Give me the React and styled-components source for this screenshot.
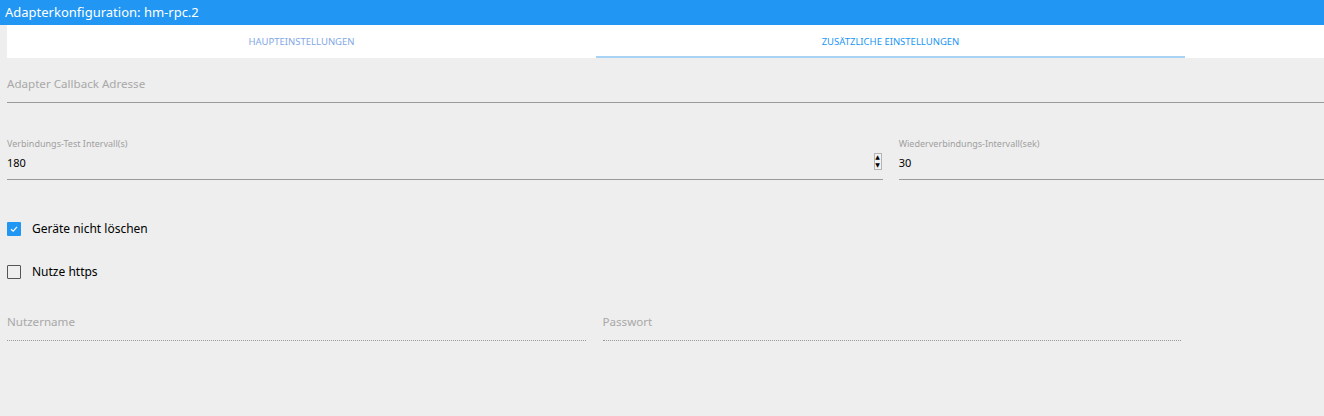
import React from 'react';
import styled, { createGlobalStyle } from 'styled-components';

const GlobalStyle = createGlobalStyle`
  html, body {
    margin: 0;
    padding: 0;
    background: #eeeeee;
    font-family: "Noto Sans", "DejaVu Sans", sans-serif;
  }
`;

const Page = styled.div`
  width: 1324px;
  height: 416px;
  background: #eeeeee;
  overflow: hidden;
`;

const TitleBar = styled.div`
  height: 25px;
  background: #2196f3;
  color: #fff;
  font-size: 13px;
  line-height: 24px;
  padding-left: 5px;
`;

const Tabs = styled.div`
  display: flex;
  margin-left: 7px;
  height: 33px;
  background: #fff;
`;

const Tab = styled.div`
  width: 589px;
  display: flex;
  align-items: center;
  justify-content: center;
  padding-top: 1px;
  font-size: 9.5px;
  text-transform: uppercase;
  color: ${(p) => (p.active ? '#2196f3' : '#82a8e6')};
  border-bottom: 2px solid ${(p) => (p.active ? '#a9d3f5' : 'transparent')};
  box-sizing: border-box;
`;

const Content = styled.div`
  padding: 0 0 0 7px;
`;

const Field = styled.div`
  display: flex;
  flex-direction: column;
  flex: ${(p) => p.flex || 1};
  border-bottom: 1px ${(p) => (p.dotted ? 'dotted' : 'solid')} #9a9a9a;
`;

const BigLabel = styled.div`
  font-size: 11.6px;
  color: #a8a8a8;
  height: ${(p) => p.h || 44}px;
  line-height: 18px;
  padding-top: ${(p) => p.pt || 17}px;
  box-sizing: border-box;
`;

const Row = styled.div`
  display: flex;
  gap: ${(p) => p.gap || 16}px;
  margin-top: ${(p) => p.top || 0}px;
  width: ${(p) => p.width || 'auto'};
`;

const SmallLabel = styled.div`
  font-size: 9px;
  color: #a0a0a0;
  line-height: 12px;
`;

const ValueLine = styled.div`
  display: flex;
  align-items: center;
  justify-content: space-between;
  height: 29px;
  padding-bottom: 5px;
  box-sizing: border-box;
  font-size: 11px;
  color: #000;
`;

const Spinner = styled.div`
  display: flex;
  flex-direction: column;
  justify-content: space-around;
  margin-right: 1px;
  margin-top: -2px;
  width: 8px;
  height: 17px;
  border: 1px solid #b5b5b5;
  background: #f2f2f2;
  color: #000;
  font-size: 6px;
  line-height: 6px;
  text-align: center;
  box-sizing: border-box;
`;

const CheckRow = styled.label`
  display: flex;
  align-items: center;
  gap: 11px;
  font-size: 12px;
  color: #000;
  margin-top: ${(p) => p.top}px;
`;

const Box = styled.span`
  width: 14px;
  height: 14px;
  box-sizing: border-box;
  border: ${(p) => (p.checked ? 'none' : '1.5px solid #555')};
  background: ${(p) => (p.checked ? '#2196f3' : 'transparent')};
  border-radius: 1px;
  display: flex;
  align-items: center;
  justify-content: center;
`;

function App() {
  return (
    <Page>
      <GlobalStyle />
      <TitleBar>Adapterkonfiguration: hm-rpc.2</TitleBar>
      <Tabs>
        <Tab>Haupteinstellungen</Tab>
        <Tab active>Zusätzliche Einstellungen</Tab>
      </Tabs>
      <Content>
        <Field>
          <BigLabel h={44} pt={17}>Adapter Callback Adresse</BigLabel>
        </Field>
        <Row top={35}>
          <Field flex={875}>
            <SmallLabel>Verbindungs-Test Intervall(s)</SmallLabel>
            <ValueLine>
              180
              <Spinner>
                <span>▲</span>
                <span>▼</span>
              </Spinner>
            </ValueLine>
          </Field>
          <Field flex={425}>
            <SmallLabel>Wiederverbindungs-Intervall(sek)</SmallLabel>
            <ValueLine>30</ValueLine>
          </Field>
        </Row>
        <CheckRow top={40}>
          <Box checked>
            <svg width="10" height="10" viewBox="0 0 10 10">
              <path d="M2 5.2 L4.2 7.2 L8 2.8" fill="none" stroke="#fff" strokeWidth="1.2" />
            </svg>
          </Box>
          Geräte nicht löschen
        </CheckRow>
        <CheckRow top={26}>
          <Box />
          Nutze https
        </CheckRow>
        <Row top={16} gap={17} width="1174px">
          <Field dotted>
            <BigLabel>Nutzername</BigLabel>
          </Field>
          <Field dotted>
            <BigLabel>Passwort</BigLabel>
          </Field>
        </Row>
      </Content>
    </Page>
  );
}

export default App;
